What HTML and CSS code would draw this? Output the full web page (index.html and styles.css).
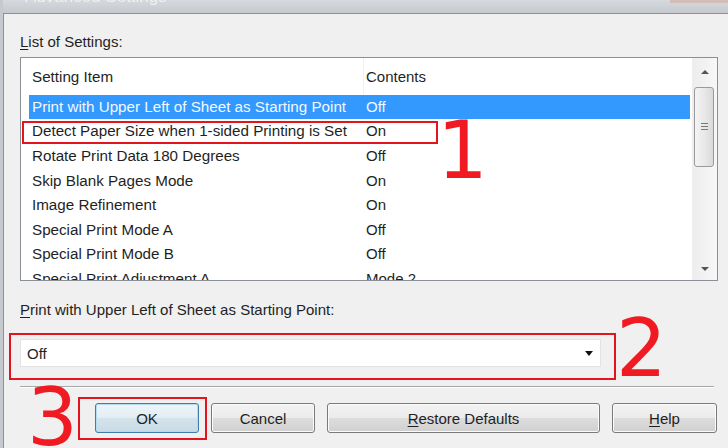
FILE: index.html
```html
<!DOCTYPE html>
<html lang="en">
<head>
<meta charset="UTF-8">
<title>Advanced Settings</title>
<link rel="stylesheet" href="styles.css">
</head>
<body>
    <div class="window">
        <div class="titlebar">
            <span class="title">Advanced Settings</span>
            <span class="close-btn"></span>
        </div>

        <div class="dialog">
            <div class="label"><u>L</u>ist of Settings:</div>

            <div class="listbox">
                <div class="list-main">
                    <div class="list-head">
                        <span class="cell-item">Setting Item</span>
                        <span class="cell-val">Contents</span>
                    </div>
                    <div class="row selected">
                        <span class="cell-item">Print with Upper Left of Sheet as Starting Point</span>
                        <span class="cell-val">Off</span>
                    </div>
                    <div class="row">
                        <span class="cell-item">Detect Paper Size when 1-sided Printing is Set</span>
                        <span class="cell-val">On</span>
                    </div>
                    <div class="row">
                        <span class="cell-item">Rotate Print Data 180 Degrees</span>
                        <span class="cell-val">Off</span>
                    </div>
                    <div class="row">
                        <span class="cell-item">Skip Blank Pages Mode</span>
                        <span class="cell-val">On</span>
                    </div>
                    <div class="row">
                        <span class="cell-item">Image Refinement</span>
                        <span class="cell-val">On</span>
                    </div>
                    <div class="row">
                        <span class="cell-item">Special Print Mode A</span>
                        <span class="cell-val">Off</span>
                    </div>
                    <div class="row">
                        <span class="cell-item">Special Print Mode B</span>
                        <span class="cell-val">Off</span>
                    </div>
                    <div class="row">
                        <span class="cell-item">Special Print Adjustment A</span>
                        <span class="cell-val">Mode 2</span>
                    </div>
                </div>
                <div class="scrollbar">
                    <div class="sb-arrow"><span class="tri-up"></span></div>
                    <div class="sb-thumb"><span class="grip"></span></div>
                    <div class="sb-track"></div>
                    <div class="sb-arrow bottom"><span class="tri-down"></span></div>
                </div>
            </div>

            <div class="label second"><u>P</u>rint with Upper Left of Sheet as Starting Point:</div>

            <div class="combo">
                <span>Off</span>
                <span class="combo-arrow"></span>
            </div>

            <div class="separator"></div>

            <div class="buttons">
                <button class="btn btn-ok">OK</button>
                <button class="btn btn-cancel">Cancel</button>
                <button class="btn btn-restore"><u>R</u>estore Defaults</button>
                <button class="btn btn-help"><u>H</u>elp</button>
            </div>
        </div>
    </div>

    <!-- red callouts drawn over the dialog -->
    <div class="annotations">
        <div class="mark-box box-1"></div>
        <div class="mark-num num-1">1</div>
        <div class="mark-box box-2"></div>
        <div class="mark-num num-2">2</div>
        <div class="mark-box box-3"></div>
        <div class="mark-num num-3">3</div>
    </div>
</body>
</html>
```

FILE: styles.css
```css
/* Basic Reset & Body Styling */
body {
    margin: 0;
    width: 728px;
    height: 448px;
    overflow: hidden;
    position: relative;
    font-family: "Liberation Sans", Arial, sans-serif;
    font-size: 15px;
    color: #1f1f1f;
    background-color: #f0f0f0;
}

.window {
    height: 448px;
    border-left: 3px solid #c6cacf;
}

/* Title bar, mostly cropped off */
.titlebar {
    position: relative;
    height: 13px;
    overflow: hidden;
    background: linear-gradient(#d6d9dd, #c5c9ce);
    border-bottom: 1px solid #8c8f93;
}

.title {
    display: block;
    margin-top: -13px;
    padding-left: 22px;
    font-size: 17px;
    color: #eef0f2;
    filter: blur(0.6px);
}

.close-btn {
    position: absolute;
    top: 0;
    right: 0;
    width: 58px;
    height: 3px;
    background: #d2bdb9;
}

.dialog {
    height: 434px;
    border-left: 1px solid #8e9195;
    padding: 18px 10px 0 16px;
}

.label {
    height: 20px;
    line-height: 20px;
}

.label u,
.btn u {
    text-decoration-thickness: 1px;
    text-underline-offset: 2px;
}

.label.second {
    margin-top: 19px;
}

/* List view */
.listbox {
    display: flex;
    margin-top: 5px;
    height: 222px;
    border: 1px solid #8b9097;
    background-color: #ffffff;
}

.list-main {
    flex: 1;
    overflow: hidden;
}

.list-head {
    display: flex;
    align-items: center;
    height: 36px;
    margin-left: 8px;
}

.list-head .cell-item {
    height: 36px;
    line-height: 37px;
    border-right: 1px solid #f0f0f0;
}

.row {
    display: flex;
    align-items: center;
    height: 24.6px;
    margin: 0 2px 0 8px;
}

.row.selected {
    background-color: #3399ff;
    color: #f2f8ff;
    box-shadow: inset 0 1px 0 #ffffff;
}

.cell-item {
    width: 335px;
    padding-left: 3px;
    box-sizing: border-box;
    white-space: nowrap;
    font-size: 15.2px;
}

.cell-val {
    padding-left: 2px;
    white-space: nowrap;
}

/* Scrollbar */
.scrollbar {
    display: flex;
    flex-direction: column;
    width: 24px;
    background: linear-gradient(90deg, #ededed, #f7f7f7);
    border-left: 1px solid #eeeeee;
}

.sb-arrow {
    display: flex;
    justify-content: center;
    align-items: center;
    height: 28px;
}

.sb-arrow.bottom {
    height: 22px;
}

.tri-up {
    border-left: 4px solid transparent;
    border-right: 4px solid transparent;
    border-bottom: 4px solid #555555;
}

.tri-down {
    border-left: 4px solid transparent;
    border-right: 4px solid transparent;
    border-top: 4px solid #555555;
}

.sb-thumb {
    display: flex;
    justify-content: center;
    align-items: center;
    height: 80px;
    margin: 1px 3px 0 1px;
    border: 1px solid #9a9a9a;
    border-radius: 3px;
    box-sizing: border-box;
    background: linear-gradient(90deg, #f4f4f4, #e9e9e9 50%, #d9d9d9);
}

.grip {
    width: 7px;
    height: 9px;
    background: repeating-linear-gradient(#7a7a7a 0 1px, transparent 1px 3px);
}

.sb-track {
    flex: 1;
}

/* Combo box */
.combo {
    display: flex;
    justify-content: space-between;
    align-items: center;
    width: 581px;
    height: 28px;
    margin-top: 19px;
    padding: 0 6px;
    box-sizing: border-box;
    border: 1px solid #e3e3e3;
    background-color: #ffffff;
}

.combo-arrow {
    margin-right: 1px;
    border-left: 4px solid transparent;
    border-right: 4px solid transparent;
    border-top: 5px solid #111111;
}

.separator {
    margin: 19px 4px 0 0;
    border-top: 1px solid #a7a7a7;
    border-bottom: 1px solid #ffffff;
}

/* Buttons */
.buttons {
    display: flex;
    gap: 12px;
    margin-top: 15px;
    padding-left: 75px;
}

.btn {
    height: 30px;
    padding: 0;
    font-family: "Liberation Sans", Arial, sans-serif;
    font-size: 15px;
    color: #1f1f1f;
    border: 1px solid #7a7a7a;
    border-radius: 3px;
    background: linear-gradient(#f3f3f3, #ebebeb 50%, #dddddd 51%, #d0d0d0);
    box-shadow: inset 0 0 0 1px #fbfbfb;
}

.btn-ok {
    width: 104px;
    border-color: #3d7eaf;
    background: linear-gradient(#eef5f9, #e2edf3 50%, #d4e3eb 51%, #c8dbe6);
    box-shadow: inset 0 0 0 1px #b3dcf2;
}

.btn-cancel {
    width: 104px;
}

.btn-restore {
    width: 273px;
}

.btn-help {
    width: 105px;
}

/* Red callouts */
.annotations {
    position: absolute;
    top: 0;
    left: 0;
    width: 728px;
    height: 448px;
    pointer-events: none;
}

.mark-box {
    position: absolute;
    box-sizing: border-box;
    border: 2px solid #e3141d;
}

.box-1 { left: 22px; top: 121px; width: 416px; height: 23px; }
.box-2 { left: 9px; top: 333px; width: 607px; height: 47px; }
.box-3 { left: 78px; top: 397px; width: 129px; height: 43px; }

.mark-num {
    position: absolute;
    font-family: "DejaVu Sans", sans-serif;
    font-size: 80px;
    line-height: 80px;
    color: #ef1a22;
}

.num-1 { left: 437px; top: 111px; }
.num-2 { left: 616px; top: 309px; }
.num-3 { left: 27px; top: 378px; }
```
